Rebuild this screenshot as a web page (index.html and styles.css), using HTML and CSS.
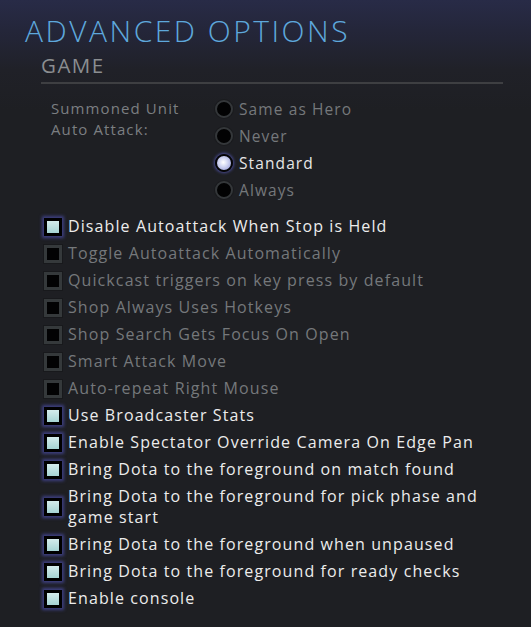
FILE: index.html
```html
<!DOCTYPE html>
<html>
<head>
<meta charset="utf-8">
<link rel="stylesheet" href="styles.css">
</head>
<body>
<div class="panel">
  <h1 class="title">ADVANCED OPTIONS</h1>
  <section class="section">
    <h2 class="section-title">GAME</h2>
    <div class="radio-group">
      <div class="radio-label">Summoned Unit<br>Auto Attack:</div>
      <div class="radios">
        <div class="radio"><span class="dot"></span><span>Same as Hero</span></div>
        <div class="radio"><span class="dot"></span><span>Never</span></div>
        <div class="radio selected"><span class="dot"></span><span>Standard</span></div>
        <div class="radio"><span class="dot"></span><span>Always</span></div>
      </div>
    </div>
    <div class="checks">
      <div class="check on"><span class="box"></span><span class="label">Disable Autoattack When Stop is Held</span></div>
      <div class="check"><span class="box"></span><span class="label">Toggle Autoattack Automatically</span></div>
      <div class="check"><span class="box"></span><span class="label">Quickcast triggers on key press by default</span></div>
      <div class="check"><span class="box"></span><span class="label">Shop Always Uses Hotkeys</span></div>
      <div class="check"><span class="box"></span><span class="label">Shop Search Gets Focus On Open</span></div>
      <div class="check"><span class="box"></span><span class="label">Smart Attack Move</span></div>
      <div class="check"><span class="box"></span><span class="label">Auto-repeat Right Mouse</span></div>
      <div class="check on"><span class="box"></span><span class="label">Use Broadcaster Stats</span></div>
      <div class="check on"><span class="box"></span><span class="label">Enable Spectator Override Camera On Edge Pan</span></div>
      <div class="check on"><span class="box"></span><span class="label">Bring Dota to the foreground on match found</span></div>
      <div class="check on multi"><span class="box"></span><span class="label">Bring Dota to the foreground for pick phase and game start</span></div>
      <div class="check on"><span class="box"></span><span class="label">Bring Dota to the foreground when unpaused</span></div>
      <div class="check on"><span class="box"></span><span class="label">Bring Dota to the foreground for ready checks</span></div>
      <div class="check on"><span class="box"></span><span class="label">Enable console</span></div>
    </div>
  </section>
</div>
</body>
</html>
```
FILE: styles.css
```css
html, body {
  margin: 0;
  padding: 0;
}
body {
  width: 531px;
  height: 627px;
  overflow: hidden;
  background: linear-gradient(180deg, #282b47 0px, #24263a 30px, #202128 70px, #1e1f23 110px, #1e1f23 100%);
  font-family: "Open Sans", "Noto Sans", sans-serif;
}
.panel {
  padding: 13px 28px 0 25px;
}
.title {
  margin: 0 0 3px;
  font-weight: 300;
  font-size: 30px;
  line-height: 36px;
  letter-spacing: 2.5px;
  color: #5ea8dc;
}
.section {
  margin-left: 16px;
}
.section-title {
  margin: 0;
  font-weight: 400;
  font-size: 20.5px;
  line-height: 26px;
  letter-spacing: 1.5px;
  color: #8b8e91;
  padding-bottom: 4px;
  border-bottom: 2px solid #3e3f42;
}
.radio-group {
  display: flex;
  margin-top: 11px;
  font-size: 15px;
  letter-spacing: 1px;
}
.radio-label {
  width: 164px;
  padding-left: 10px;
  padding-top: 3px;
  color: #7b7e81;
  line-height: 21px;
  letter-spacing: 1.1px;
}
.radios {
  display: flex;
  flex-direction: column;
}
.radio {
  display: flex;
  align-items: center;
  height: 27px;
  color: #75787b;
  font-size: 15.5px;
  letter-spacing: 1.1px;
}
.radio.selected {
  color: #e6e6e6;
}
.dot {
  width: 14px;
  height: 14px;
  border: 2px solid #34373a;
  border-radius: 50%;
  background: #020203;
  margin-right: 6px;
  box-shadow: 0 0 0 1px #1a1b1e;
}
.selected .dot {
  border-color: #050507;
  background: radial-gradient(circle at 45% 45%, #ffffff 0%, #d8dcf4 35%, #8d93d4 100%);
  box-shadow: 0 0 3px 1px #4a4d9a;
}
.checks {
  margin-top: 10px;
  font-size: 16px;
  letter-spacing: 1.1px;
}
.check {
  display: flex;
  align-items: center;
  min-height: 27px;
  color: #75787b;
}
.check.on {
  color: #ececec;
}
.check.multi {
  min-height: 48px;
}
.box {
  flex: none;
  width: 12px;
  height: 12px;
  border: 3px solid #35393b;
  background: #020203;
  margin-left: 3px;
  margin-right: 6px;
  box-shadow: 0 0 0 1px #18191c;
}
.on .box {
  border-color: #000;
  background: linear-gradient(180deg, #d4ecec 0%, #a6d4d4 100%);
  box-shadow: 0 0 3px 2px #3d3f80;
}
.label {
  line-height: 21px;
  max-width: 420px;
}
```
